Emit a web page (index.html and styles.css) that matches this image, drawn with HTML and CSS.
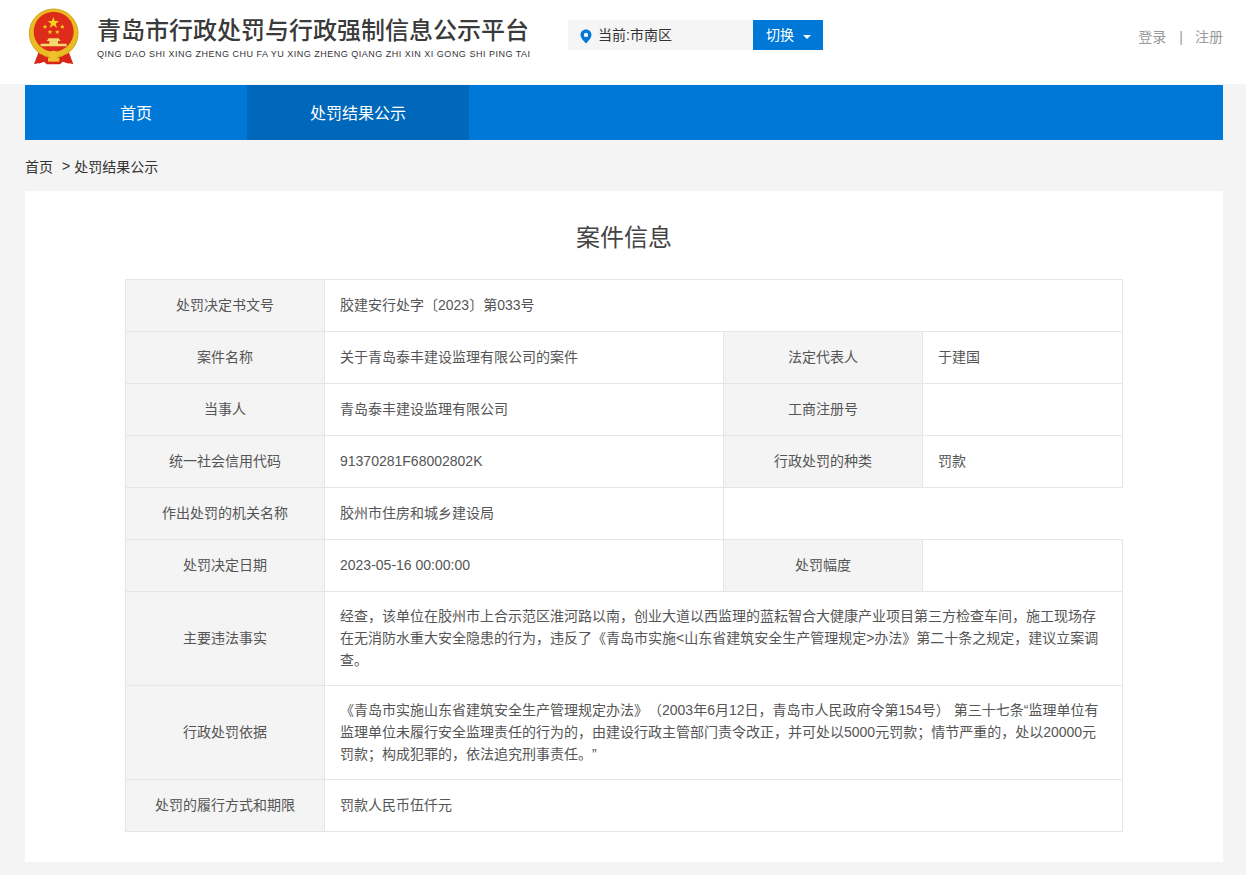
FILE: index.html
```html
<!DOCTYPE html>
<html lang="zh-CN">
<head>
<meta charset="utf-8">
<title>案件信息</title>
<link rel="stylesheet" href="styles.css">
</head>
<body>
<header class="topbar">
  <div class="brand">
    <svg class="emblem" width="52" height="57" viewBox="24 9 156 171">
      <path d="M58 135 L42 178 L72 170 L80 178 H120 L128 170 L160 178 L144 135 Z" fill="#d8261a"/>
      <circle cx="101" cy="85" r="74" fill="#e9bd22"/>
      <circle cx="101" cy="85" r="73" fill="none" stroke="#c9981c" stroke-width="2"/>
      <circle cx="101" cy="80" r="60" fill="#dd2c19"/>
      <path d="M100 36 L104.500 48 L117 48 L107 56 L111 69 L100 61 L89 69 L93 56 L83 48 L95.500 48 Z" fill="#f8d320"/>
      <path d="M75 58 L77 63 L82 63 L78 66 L80 71 L75 68 L70 71 L72 66 L68 63 L73 63 Z" fill="#f8d320"/>
      <path d="M127 58 L129 63 L134 63 L130 66 L132 71 L127 68 L122 71 L124 66 L120 63 L125 63 Z" fill="#f8d320"/>
      <path d="M90 74 L92 79 L97 79 L93 82 L95 87 L90 84 L85 87 L87 82 L83 79 L88 79 Z" fill="#f8d320"/>
      <path d="M112 74 L114 79 L119 79 L115 82 L117 87 L112 84 L107 87 L109 82 L105 79 L110 79 Z" fill="#f8d320"/>
      <path d="M86 100 H116 L122 108 H114 V116 H140 V124 H62 V116 H88 V108 H80 Z" fill="#f6d96e"/>
      <path d="M45 116 Q100 165 157 116 L150 136 Q100 172 52 136 Z" fill="#e9bd22"/>
      <path d="M64 148 L56 176 L76 168 L82 176 H120 L126 168 L146 176 L138 148 L122 158 H80 Z" fill="#d8261a"/>
      <circle cx="101" cy="150" r="13" fill="#efc22c"/>
      <path d="M84 158 H118 V170 H84 Z" fill="#efc22c"/>
    </svg>
    <div class="brand-text">
      <div class="brand-name">青岛市行政处罚与行政强制信息公示平台</div>
      <div class="brand-pinyin">QING DAO SHI XING ZHENG CHU FA YU XING ZHENG QIANG ZHI XIN XI GONG SHI PING TAI</div>
    </div>
  </div>
  <div class="location">
    <div class="location-current">
      <svg class="pin" width="12" height="15" viewBox="0 0 12 15"><path fill-rule="evenodd" d="M6 0.500 C2.900 0.500 0.500 2.900 0.500 5.800 C0.500 9.200 4.300 12.800 6 14.500 C7.700 12.800 11.500 9.200 11.500 5.800 C11.500 2.900 9.100 0.500 6 0.500 Z M6 3.700 A2.200 2.200 0 1 1 6 8.100 A2.200 2.200 0 1 1 6 3.700 Z" fill="#0078d7"/></svg>
      <span>当前:市南区</span>
    </div>
    <button class="location-switch" type="button">切换<span class="caret"></span></button>
  </div>
  <div class="account"><a>登录</a><span class="sep">|</span><a>注册</a></div>
</header>

<nav class="mainnav">
  <a class="nav-item">首页</a>
  <a class="nav-item active">处罚结果公示</a>
</nav>

<div class="crumbs"><a>首页</a><span class="crumb-sep">&gt;</span><a>处罚结果公示</a></div>

<main class="card">
  <h1 class="card-title">案件信息</h1>
  <table class="info">
    <colgroup><col class="c-label"><col class="c-value"><col class="c-label"><col class="c-rest"></colgroup>
    <tr><th>处罚决定书文号</th><td colspan="3">胶建安行处字〔2023〕第033号</td></tr>
    <tr><th>案件名称</th><td>关于青岛泰丰建设监理有限公司的案件</td><th>法定代表人</th><td>于建国</td></tr>
    <tr><th>当事人</th><td>青岛泰丰建设监理有限公司</td><th>工商注册号</th><td></td></tr>
    <tr><th>统一社会信用代码</th><td>91370281F68002802K</td><th>行政处罚的种类</th><td>罚款</td></tr>
    <tr><th>作出处罚的机关名称</th><td>胶州市住房和城乡建设局</td></tr>
    <tr><th>处罚决定日期</th><td>2023-05-16 00:00:00</td><th>处罚幅度</th><td></td></tr>
    <tr class="tall"><th>主要违法事实</th><td colspan="3">经查，该单位在胶州市上合示范区淮河路以南，创业大道以西监理的蓝耘智合大健康产业项目第三方检查车间，施工现场存在无消防水重大安全隐患的行为，违反了《青岛市实施&lt;山东省建筑安全生产管理规定&gt;办法》第二十条之规定，建议立案调查。</td></tr>
    <tr class="tall"><th>行政处罚依据</th><td colspan="3">《青岛市实施山东省建筑安全生产管理规定办法》（2003年6月12日，青岛市人民政府令第154号） 第三十七条“监理单位有监理单位未履行安全监理责任的行为的，由建设行政主管部门责令改正，并可处以5000元罚款；情节严重的，处以20000元罚款；构成犯罪的，依法追究刑事责任。”</td></tr>
    <tr><th>处罚的履行方式和期限</th><td colspan="3">罚款人民币伍仟元</td></tr>
  </table>
</main>
</body>
</html>
```
FILE: styles.css
```css
* { box-sizing: border-box; }
html, body { margin: 0; padding: 0; }
body {
  background: #f4f4f4;
  color: #333;
  font-family: "Liberation Sans", "Noto Sans CJK SC", sans-serif;
  font-size: 14px;
  height: 875px;
  overflow: hidden;
  text-spacing-trim: space-all;
}
.topbar {
  height: 84px;
  background: #fff;
  display: flex;
  align-items: flex-start;
  padding: 0 23px 0 28px;
}
.brand { display: flex; align-items: flex-start; padding-top: 8px; width: 540px; }
.emblem { flex: none; }
.brand-text { margin-left: 17px; padding-top: 5px; }
.brand-name {
  font-size: 24px;
  line-height: 36px;
  font-weight: 500;
  color: #3a3a3a;
  white-space: nowrap;
}
.brand-pinyin {
  font-size: 9px;
  line-height: 13px;
  margin-top: -1px;
  color: #333;
  letter-spacing: 0.5px;
  white-space: nowrap;
}
.location { display: flex; margin-top: 20px; height: 30px; }
.location-current {
  width: 185px;
  background: #f5f5f5;
  display: flex;
  align-items: center;
  padding-left: 12px;
  font-size: 14px;
  color: #333;
}
.pin { margin-right: 6px; margin-top: 2px; }
.location-current span { margin-top: -2px; }
.location-switch {
  width: 70px;
  height: 30px;
  border: 0;
  padding: 0 0 2px 13px;
  background: #0078d7;
  color: #fff;
  font: inherit;
  display: flex;
  align-items: center;
}
.caret {
  width: 0;
  height: 0;
  margin-left: 9px;
  margin-top: 6px;
  border-left: 4px solid transparent;
  border-right: 4px solid transparent;
  border-top: 4px solid #fff;
}
.account {
  margin-left: auto;
  margin-top: 28px;
  color: #999;
  line-height: 18px;
  display: flex;
}
.sep { margin: 0 12px 0 13px; }
.mainnav {
  display: flex;
  height: 55px;
  margin: 1px 23px 0 25px;
  background: #0078d7;
}
.nav-item {
  width: 222px;
  color: #fff;
  font-size: 16px;
  line-height: 57px;
  text-align: center;
}
.nav-item.active { background: #0068bb; }
.crumbs {
  height: 51px;
  margin-left: 25px;
  display: flex;
  align-items: center;
  color: #333;
  font-size: 14px;
}
.crumb-sep { margin: 0 4px 0 9px; }
.card {
  margin: 0 23px 0 25px;
  height: 671px;
  background: #fff;
  padding: 27px 100px 0;
}
.card-title {
  margin: 0 0 21px;
  font-size: 24px;
  font-weight: 400;
  line-height: 40px;
  text-align: center;
  color: #444;
}
.info {
  width: 997px;
  border-collapse: collapse;
  table-layout: fixed;
}
.c-label { width: 199px; }
.c-value { width: 399px; }
.c-rest { width: 200px; }
.info th, .info td {
  border: 1px solid #e6e6e6;
  height: 52px;
  font-weight: 400;
  font-size: 14px;
  line-height: 22px;
  color: #555;
  padding: 0 15px 2px;
}
.info th { background: #f4f4f4; text-align: center; padding: 0 5px 2px; }
.info td { text-align: left; }
.info .tall th, .info .tall td { height: 94px; }
```
